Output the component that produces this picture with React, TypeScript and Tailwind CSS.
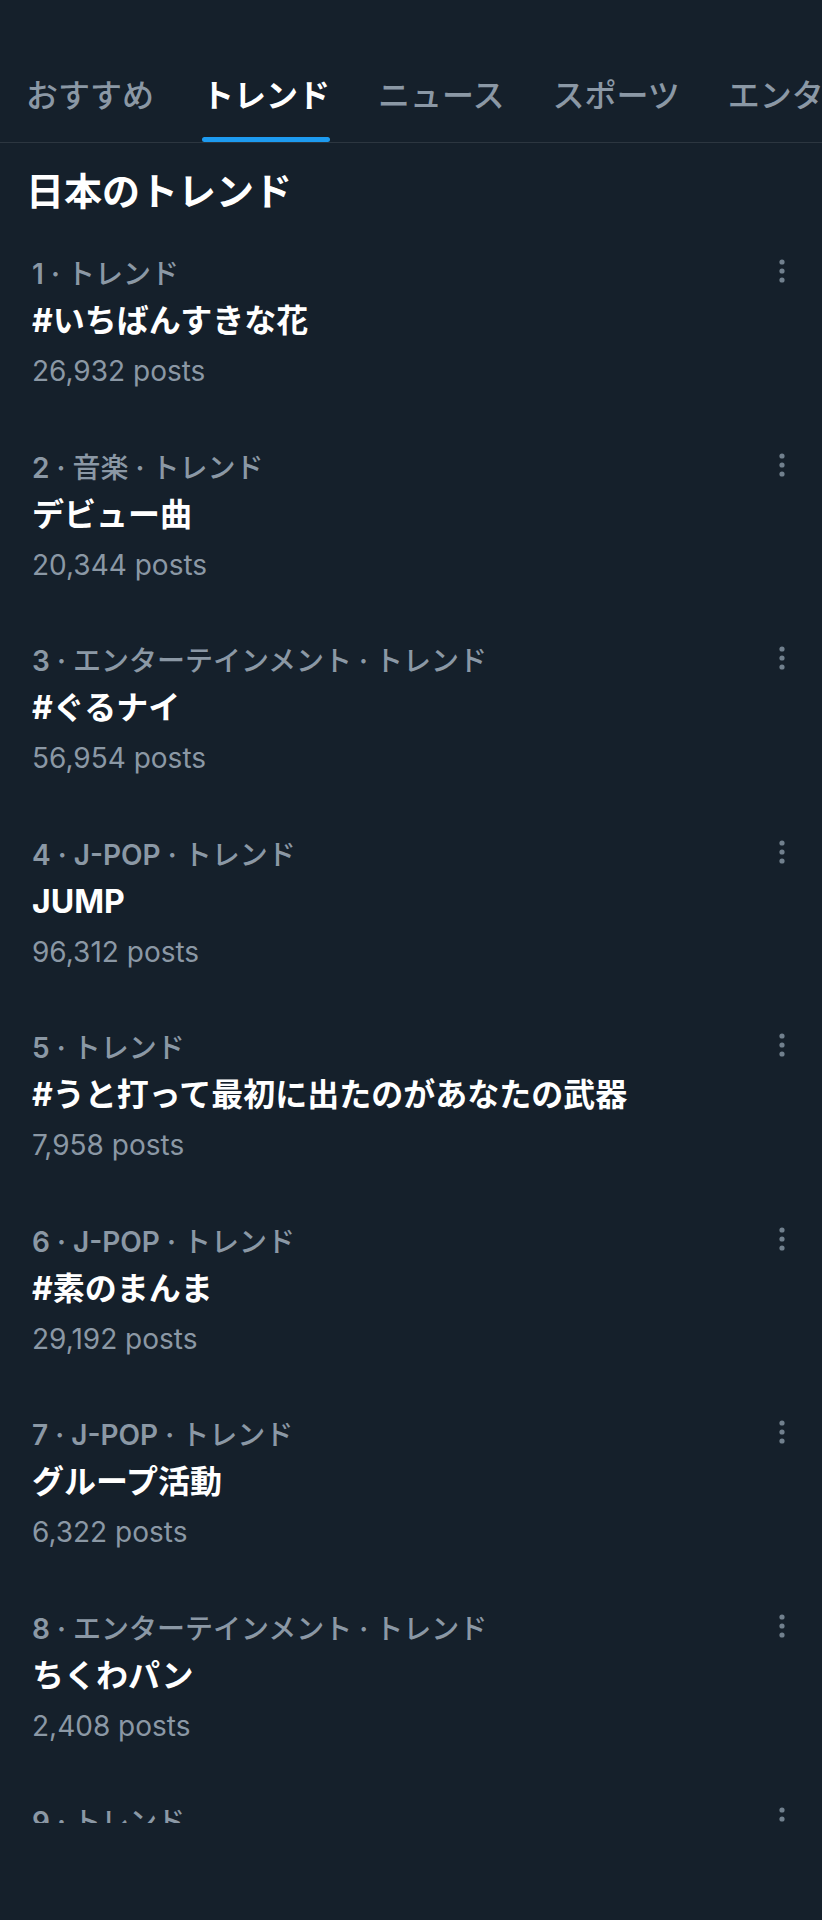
const TABS = ["おすすめ", "トレンド", "ニュース", "スポーツ", "エンターテイメント"];

const TRENDS = [
  { rank: 1, category: "トレンド", title: "#いちばんすきな花", posts: "26,932" },
  { rank: 2, category: "音楽 · トレンド", title: "デビュー曲", posts: "20,344" },
  { rank: 3, category: "エンターテインメント · トレンド", title: "#ぐるナイ", posts: "56,954" },
  { rank: 4, category: "J-POP · トレンド", title: "JUMP", posts: "96,312" },
  { rank: 5, category: "トレンド", title: "#うと打って最初に出たのがあなたの武器", posts: "7,958" },
  { rank: 6, category: "J-POP · トレンド", title: "#素のまんま", posts: "29,192" },
  { rank: 7, category: "J-POP · トレンド", title: "グループ活動", posts: "6,322" },
  { rank: 8, category: "エンターテインメント · トレンド", title: "ちくわパン", posts: "2,408" },
  { rank: 9, category: "トレンド", title: "推しの子", posts: "12,045" },
];

const MoreIcon = () => (
  <svg width="20" height="24" viewBox="0 0 20 24" fill="#71808e">
    <circle cx="10" cy="3" r="2.6" />
    <circle cx="10" cy="12" r="2.6" />
    <circle cx="10" cy="21" r="2.6" />
  </svg>
);

// latin runs look heavier than kana in the meta line
const isLatin = (s: string) => /^[\x00-\x7f]+$/.test(s);

const TrendItem = ({ rank, category, title, posts }: (typeof TRENDS)[number]) => {
  const parts = [String(rank), ...category.split(" · ")];
  return (
    <div className="pl-[32px] pr-[30px] pt-[22px] pb-[21.5px]">
      <div className="flex items-center justify-between h-[50px]">
        <span className="pt-[6px] text-[28px] text-[#8b98a5] whitespace-nowrap">
          {parts.map((p, i) => (
            <span key={i}>
              {i > 0 && <span className="font-semibold"> · </span>}
              <span className={isLatin(p) ? "font-semibold" : "font-medium"}>{p}</span>
            </span>
          ))}
        </span>
        <MoreIcon />
      </div>
      <div className="h-[50px] flex items-center text-[32px] font-bold text-white whitespace-nowrap">
        {title}
      </div>
      <div className="h-[50px] flex items-center text-[28px] text-[#8b98a5]">
        {posts} posts
      </div>
    </div>
  );
};

export default function App() {
  return (
    <div className="w-[822px] h-[1920px] bg-[#15202b] font-['Inter','Noto_Sans_CJK_JP',sans-serif] overflow-hidden">
      <div className="h-[1823px] overflow-hidden">
        {/* tabs */}
        <div className="pt-[76px] border-b border-[#2c3640] overflow-hidden">
          <div className="flex gap-[48px] pl-[26px] whitespace-nowrap">
            {TABS.map((tab, i) => (
              <div key={tab} className="flex flex-col shrink-0">
                <span
                  className={
                    i === 1
                      ? "text-[32px] leading-[40px] font-bold text-white"
                      : "text-[32px] leading-[40px] font-medium text-[#8b98a5]"
                  }
                >
                  {tab}
                </span>
                <div
                  className={
                    i === 1
                      ? "mt-[21px] h-[5px] rounded-full bg-[#1d9bf0]"
                      : "mt-[21px] h-[5px]"
                  }
                />
              </div>
            ))}
          </div>
        </div>

        <h2 className="pl-[26px] pt-[25px] pb-[10px] text-[38px] leading-[46px] font-bold text-white">
          日本のトレンド
        </h2>

        <div className="flex flex-col">
          {TRENDS.map((t) => (
            <TrendItem key={t.rank} {...t} />
          ))}
        </div>
      </div>
      <div className="h-[97px]" />
    </div>
  );
}
